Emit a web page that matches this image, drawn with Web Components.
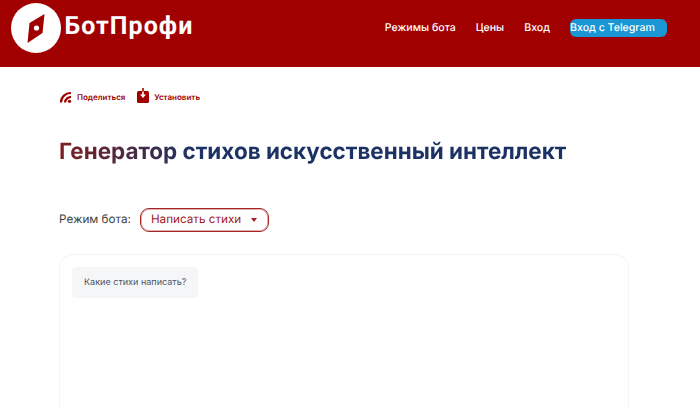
<!DOCTYPE html>
<html lang="ru">
<head>
<meta charset="utf-8">
<title>БотПрофи</title>
<style>
  html, body { margin: 0; padding: 0; height: 407px; overflow: hidden; background: #fff; font-family: Inter, "Liberation Sans", sans-serif; text-rendering: geometricPrecision; }
</style>
</head>
<body>
<site-header></site-header>
<main-page>
  <action-bar></action-bar>
  <page-title>Генератор стихов искусственный интеллект</page-title>
  <mode-select label="Режим бота:" value="Написать стихи"></mode-select>
  <chat-box><chat-bubble>Какие стихи написать?</chat-bubble></chat-box>
</main-page>

<script>
// Header with logo and navigation
class SiteHeader extends HTMLElement {
  constructor() {
    super();
    this.attachShadow({ mode: 'open' });
    this.shadowRoot.innerHTML = `
      <style>
        :host { display: flex; justify-content: space-between; align-items: flex-start; height: 67px; background: #a10000; color: #fff; }
        .brand { display: flex; align-items: center; gap: 4px; margin: 3px 0 0 10.5px; }
        .brand svg { display: block; }
        .name { font: 700 25px/1 Roboto, sans-serif; letter-spacing: 1.05px; margin-top: -4px; }
        nav { display: flex; align-items: center; margin: 19px 33px 0 0; font: 500 10.6px/18px Inter, sans-serif; }
        nav a { color: #fff; margin-right: 20px; text-decoration: none; }
        nav a.tg { margin: 0; width: 97px; height: 18px; background: #1a96d4; border-radius: 6px; white-space: nowrap; }
      </style>
      <div class="brand">
        <svg width="50" height="50" viewBox="0 0 50 50">
          <circle cx="25" cy="25" r="25" fill="#fff"/>
          <path d="M33.5 11 L18.5 20 L16.5 40 L31.5 30 Z" fill="#a10000"/>
          <circle cx="25.5" cy="25" r="2.6" fill="#fff"/>
        </svg>
        <span class="name">БотПрофи</span>
      </div>
      <nav>
        <a href="#">Режимы бота</a>
        <a href="#">Цены</a>
        <a href="#">Вход</a>
        <a href="#" class="tg">Вход с Telegram</a>
      </nav>
    `;
  }
}

// Page column
class MainPage extends HTMLElement {
  constructor() {
    super();
    this.attachShadow({ mode: 'open' });
    this.shadowRoot.innerHTML = `
      <style>
        :host { display: flex; flex-direction: column; padding: 0 71px 0 59px; }
      </style>
      <slot></slot>
    `;
  }
}

// Share and install links
class ActionBar extends HTMLElement {
  constructor() {
    super();
    this.attachShadow({ mode: 'open' });
    this.shadowRoot.innerHTML = `
      <style>
        :host { display: flex; align-items: center; gap: 12px; height: 20px; margin-top: 20px; color: #a10000; font: 600 8px/1 Inter, sans-serif; }
        a { display: flex; align-items: center; gap: 5px; color: inherit; text-decoration: none; }
        svg { display: block; }
      </style>
      <a href="#">
        <svg width="13" height="12" viewBox="0 0 13 12" fill="none" stroke="#a10000" stroke-width="2.2">
          <path d="M2 11.5 A9.5 9.5 0 0 1 12 2"/>
          <path d="M6 11.5 A5.5 5.5 0 0 1 12 6.2"/>
          <circle cx="10.5" cy="10.3" r="1.6" fill="#a10000" stroke="none"/>
        </svg>
        Поделиться
      </a>
      <a href="#">
        <svg width="12" height="15" viewBox="0 0 12 15" style="margin-top:-4px">
          <rect x="0" y="3" width="12" height="12" rx="1.5" fill="#a10000"/>
          <path d="M6 0 V8" stroke="#a10000" stroke-width="1.6"/>
          <path d="M6 3.5 V7.5" stroke="#fff" stroke-width="1.6"/>
          <path d="M3 6.5 L6 10 L9 6.5 Z" fill="#fff"/>
        </svg>
        Установить
      </a>
    `;
  }
}

// Heading with gradient text
class PageTitle extends HTMLElement {
  constructor() {
    super();
    this.attachShadow({ mode: 'open' });
    this.shadowRoot.innerHTML = `
      <style>
        :host { display: block; margin-top: 28px; }
        h1 { display: inline-block; margin: 0; font: 700 22.45px/34px Inter, sans-serif; color: transparent;
             background: linear-gradient(90deg, #7d2020 0, #1d3264 27%, #1b3164 100%); -webkit-background-clip: text; background-clip: text; }
      </style>
      <h1><slot></slot></h1>
    `;
  }
}

// Bot mode dropdown
class ModeSelect extends HTMLElement {
  constructor() {
    super();
    this.attachShadow({ mode: 'open' });
    this.shadowRoot.innerHTML = `
      <style>
        :host { display: flex; align-items: center; gap: 9px; margin-top: 39px; color: #3d3d3d; font: 400 11.7px/1 Inter, sans-serif; }
        .select { display: flex; align-items: center; justify-content: space-between; box-sizing: border-box; width: 129px; height: 24px; padding: 0 11px 0 10px;
                  border: 1px solid #a52424; box-shadow: inset 0 0 0 1px rgba(161, 32, 32, .35); border-radius: 9px; color: #a12020; font-size: 11.7px; }
        .arrow { width: 0; height: 0; border: 3px solid transparent; border-top: 4px solid #a12020; border-bottom: 0; }
      </style>
      <span class="label"></span>
      <div class="select"><span class="value"></span><span class="arrow"></span></div>
    `;
  }

  connectedCallback() {
    this.shadowRoot.querySelector('.label').textContent = this.getAttribute('label');
    this.shadowRoot.querySelector('.value').textContent = this.getAttribute('value');
  }
}

// Chat area with rounded border
class ChatBox extends HTMLElement {
  constructor() {
    super();
    this.attachShadow({ mode: 'open' });
    this.shadowRoot.innerHTML = `
      <style>
        :host { display: block; box-sizing: border-box; height: 153px; margin-top: 22px; padding: 12px; border: 1px solid #f2f3f5; border-bottom: 0; border-radius: 14px 14px 0 0; }
      </style>
      <slot></slot>
    `;
  }
}

class ChatBubble extends HTMLElement {
  constructor() {
    super();
    this.attachShadow({ mode: 'open' });
    this.shadowRoot.innerHTML = `
      <style>
        :host { display: inline-block; padding: 0 12px; height: 31px; background: #f5f6f8; border-radius: 4px; color: #4b5563; font: 400 9.05px/31px Inter, sans-serif; }
      </style>
      <slot></slot>
    `;
  }
}

customElements.define('site-header', SiteHeader);
customElements.define('main-page', MainPage);
customElements.define('action-bar', ActionBar);
customElements.define('page-title', PageTitle);
customElements.define('mode-select', ModeSelect);
customElements.define('chat-box', ChatBox);
customElements.define('chat-bubble', ChatBubble);
</script>
</body>
</html>
